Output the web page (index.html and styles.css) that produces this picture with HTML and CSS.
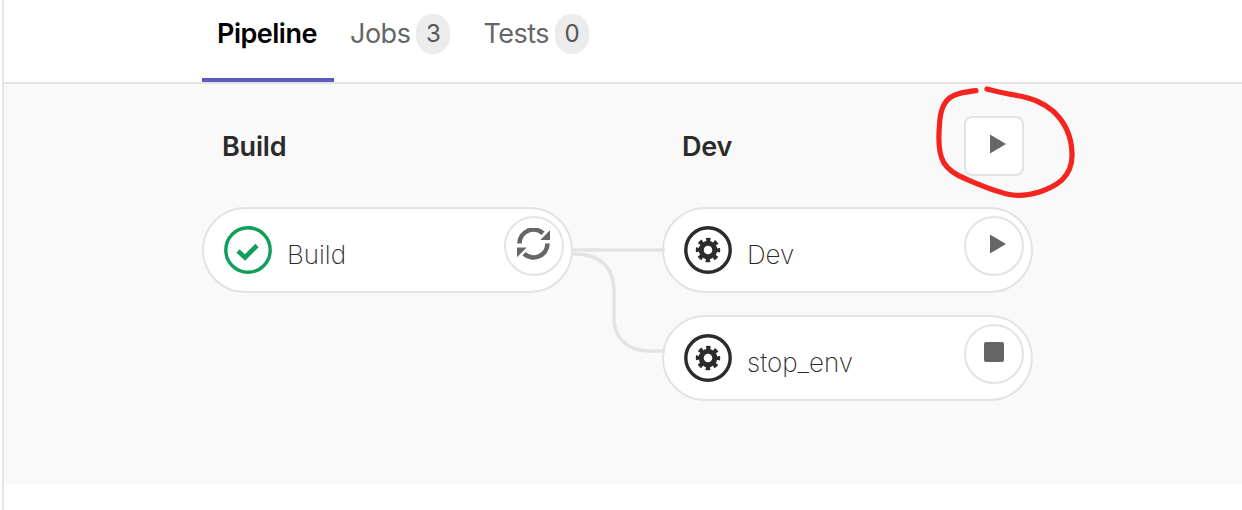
FILE: index.html
```html
<!DOCTYPE html>
<html lang="en">
<head>
<meta charset="utf-8">
<title>Pipeline</title>
<link rel="stylesheet" href="styles.css">
</head>
<body>
<div class="app">
  <nav class="tabs">
    <a class="tab active">Pipeline</a>
    <a class="tab">Jobs <span class="badge">3</span></a>
    <a class="tab">Tests <span class="badge">0</span></a>
  </nav>
  <main class="graph">
    <section class="stage">
      <header class="stage-head"><h2>Build</h2></header>
      <div class="job">
        <svg class="status" viewBox="0 0 48 48"><circle cx="24" cy="24" r="22.2" fill="none" stroke="#0f9f5a" stroke-width="3.4"/><path d="M14 25l7 6.5L33 19.5" fill="none" stroke="#0f9f5a" stroke-width="4.6"/></svg>
        <span class="job-name">Build</span>
        <button class="action"><svg class="icon-retry" viewBox="0 0 34 32"><path d="M26 5.300A14 14 0 0 0 2.500 15.500" fill="none" stroke="#666" stroke-width="4.600"/><path d="M30.500 15.500A14 14 0 0 1 7 25.700" fill="none" stroke="#666" stroke-width="4.600"/><path d="M33 2.300V12H23.300z" fill="#666"/><path d="M0 19.500h9.700L0 29.200z" fill="#666"/></svg></button>
      </div>
    </section>
    <section class="stage">
      <header class="stage-head"><h2>Dev</h2><button class="stage-action"><svg class="icon-play" viewBox="0 0 16 20"><path d="M0 0.500L16 10 0 19.500z" fill="#666"/></svg></button></header>
      <div class="job">
        <svg class="status" viewBox="0 0 48 48"><circle cx="24" cy="24" r="22.200" fill="none" stroke="#2c2c2c" stroke-width="3.400"/><circle cx="24" cy="24" r="6.800" fill="none" stroke="#2c2c2c" stroke-width="5"/><circle cx="24" cy="24" r="10.400" fill="none" stroke="#2c2c2c" stroke-width="3.600" stroke-dasharray="4.400 3.768" stroke-dashoffset="2.200"/></svg>
        <span class="job-name">Dev</span>
        <button class="action"><svg class="icon-play" viewBox="0 0 16 20"><path d="M0 0.500L16 10 0 19.500z" fill="#666"/></svg></button>
      </div>
      <div class="job">
        <svg class="status" viewBox="0 0 48 48"><circle cx="24" cy="24" r="22.200" fill="none" stroke="#2c2c2c" stroke-width="3.400"/><circle cx="24" cy="24" r="6.800" fill="none" stroke="#2c2c2c" stroke-width="5"/><circle cx="24" cy="24" r="10.400" fill="none" stroke="#2c2c2c" stroke-width="3.600" stroke-dasharray="4.400 3.768" stroke-dashoffset="2.200"/></svg>
        <span class="job-name">stop_env</span>
        <button class="action"><span class="icon-stop"></span></button>
      </div>
    </section>
    <svg class="links" viewBox="0 0 92 120"><path d="M0 10H92" fill="none" stroke="#e3e3e3" stroke-width="3.500"/><path d="M0 14C24 14 41 24 41 52V78C41 100 56 111 78 111H92" fill="none" stroke="#e3e3e3" stroke-width="3.500"/></svg>
  </main>
  <svg class="scribble" viewBox="0 0 170 130"><path d="M56 15.700C45 17 37 18 31 22C23 27 20 36 19.500 50C18 67 19 80 24 88C29 96 36 100 46 104C60 110 78 118 93 120C110 122 130 115 142 105C149 98 152.500 88 152 78C151.500 62 145 47 133 36C122 27 113 24 100 21C88 19 78 17 67 14" fill="none" stroke="#f4241e" stroke-width="5.200" stroke-linecap="round"/></svg>
</div>
</body>
</html>
```
FILE: styles.css
```css
* { box-sizing: border-box; }
html, body { margin: 0; padding: 0; background: #fff; }
body { width: 1242px; height: 510px; overflow: hidden; font-family: Inter, "Liberation Sans", sans-serif; }
.app { position: relative; margin-left: 2px; height: 510px; border-left: 2px solid #e6e6e6; }
.tabs { display: flex; height: 84px; padding-left: 198px; border-bottom: 2px solid #e3e3e3; }
.tab { display: flex; align-items: flex-start; gap: 6px; height: 82px; padding: 14px 16px 0; font-size: 27px; line-height: 40px; color: #666; letter-spacing: -0.5px; }
.tab.active { width: 132px; padding-left: 15px; border-bottom: 4px solid #5b5bbd; color: #000; font-weight: 600; }
.badge { display: block; min-width: 34px; height: 40px; padding: 0 9.5px; border-radius: 17px; background: #ececec; color: #555; font-size: 24px; line-height: 40px; text-align: center; letter-spacing: 0; }
.tab + .tab + .tab { padding-left: 17px; }
.graph { position: relative; display: flex; gap: 89px; height: 400px; padding: 32px 0 0 198px; background: #f9f9f9; }
.stage { display: flex; flex-direction: column; gap: 22px; width: 371px; }
.stage-head { display: flex; align-items: center; justify-content: space-between; height: 60px; margin-bottom: 9px; padding: 0 9px 0 20px; }
.stage-head h2 { margin: 0; font-size: 27px; font-weight: 600; color: #2b2b2b; letter-spacing: -0.2px; }
.job { display: flex; align-items: center; width: 371px; height: 86px; padding: 0 7px 0 20px; background: #fff; border: 2px solid #e3e3e3; border-radius: 43px; }
.status { width: 48px; height: 48px; flex: none; }
.job-name { flex: 1; margin-left: 15px; padding-top: 8px; font-size: 26px; font-weight: 200; color: #2a2a2a; letter-spacing: 0; }
.action { display: flex; align-items: center; justify-content: center; width: 60px; height: 60px; padding: 0 0 4px; margin-top: -8px; background: #fff; border: 2px solid #e3e3e3; border-radius: 50%; }
.stage-action { display: flex; align-items: center; justify-content: center; width: 60px; height: 60px; padding: 0 0 4px; background: #fff; border: 2px solid #e3e3e3; border-radius: 8px; }
.icon-play { width: 16px; height: 20px; margin-left: 7px; }
.icon-stop { display: block; width: 20px; height: 20px; border-radius: 2px; background: #666; }
.icon-retry { width: 34px; height: 32px; }
.links { position: absolute; left: 569px; top: 156px; width: 92px; height: 120px; }
.scribble { position: absolute; left: 916px; top: 75px; width: 170px; height: 130px; }
```
